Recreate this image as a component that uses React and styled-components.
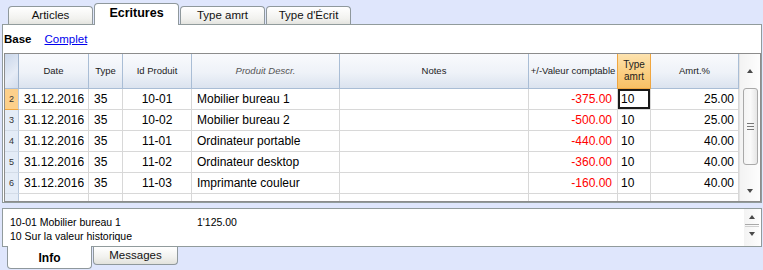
import React from "react";
import styled, { createGlobalStyle, css } from "styled-components";

const GlobalStyle = createGlobalStyle`
  body {
    margin: 0;
    background: #dfe6fc;
    font-family: "Liberation Sans", Arial, sans-serif;
  }
`;

const rows = [
  { n: 2, date: "31.12.2016", type: "35", id: "10-01", descr: "Mobilier bureau 1", val: "-375.00", ta: "10", pct: "25.00" },
  { n: 3, date: "31.12.2016", type: "35", id: "10-02", descr: "Mobilier bureau 2", val: "-500.00", ta: "10", pct: "25.00" },
  { n: 4, date: "31.12.2016", type: "35", id: "11-01", descr: "Ordinateur portable", val: "-440.00", ta: "10", pct: "40.00" },
  { n: 5, date: "31.12.2016", type: "35", id: "11-02", descr: "Ordinateur desktop", val: "-360.00", ta: "10", pct: "40.00" },
  { n: 6, date: "31.12.2016", type: "35", id: "11-03", descr: "Imprimante couleur", val: "-160.00", ta: "10", pct: "40.00" },
  { n: "", date: "", type: "", id: "", descr: "", val: "", ta: "", pct: "" },
];

const App = () => {
  return (
    <Page>
      <GlobalStyle />
      <TabBar>
        <Tab>Articles</Tab>
        <Tab $active>Ecritures</Tab>
        <Tab>Type amrt</Tab>
        <Tab>Type d'Écrit</Tab>
      </TabBar>
      <Panel>
        <Toolbar>
          <ViewName>Base</ViewName>
          <ViewLink href="#">Complet</ViewLink>
        </Toolbar>
        <GridBox>
          <Table>
            <HeadCell $corner />
            <HeadCell>Date</HeadCell>
            <HeadCell>Type</HeadCell>
            <HeadCell>Id Produit</HeadCell>
            <HeadCell $italic>Produit Descr.</HeadCell>
            <HeadCell>Notes</HeadCell>
            <HeadCell>+/-Valeur comptable</HeadCell>
            <HeadCell $current>
              Type
              <br />
              amrt
            </HeadCell>
            <HeadCell>Amrt.%</HeadCell>
            {rows.map((r, i) => (
              <React.Fragment key={i}>
                <RowNum $active={i === 0}>{r.n}</RowNum>
                <Cell>{r.date}</Cell>
                <Cell>{r.type}</Cell>
                <Cell $align="center">{r.id}</Cell>
                <Cell>{r.descr}</Cell>
                <Cell />
                <Cell $align="right" $red>
                  {r.val}
                </Cell>
                <Cell $selected={i === 0} $pad={3}>
                  {r.ta}
                </Cell>
                <Cell $align="right" $pad={4}>
                  {r.pct}
                </Cell>
              </React.Fragment>
            ))}
          </Table>
          <ScrollBar>
            <ArrowBtn $h={34}>
              <Arrow $up />
            </ArrowBtn>
            <Thumb $h={77}>
              <Grip />
            </Thumb>
            <Spacer />
            <ArrowBtn $h={20}>
              <Arrow />
            </ArrowBtn>
          </ScrollBar>
        </GridBox>
      </Panel>
      <InfoPanel>
        <InfoText>
          <InfoLine>
            <InfoLabel>10-01 Mobilier bureau 1</InfoLabel>
            <span>1'125.00</span>
          </InfoLine>
          <InfoLine>
            <InfoLabel>10 Sur la valeur historique</InfoLabel>
          </InfoLine>
        </InfoText>
        <SmallScroll>
          <ArrowBtn $h={14}>
            <Arrow $up />
          </ArrowBtn>
          <SmallThumb />
          <ArrowBtn $h={14}>
            <Arrow />
          </ArrowBtn>
        </SmallScroll>
      </InfoPanel>
      <BottomTabs>
        <BottomTab $active>Info</BottomTab>
        <BottomTab>Messages</BottomTab>
      </BottomTabs>
    </Page>
  );
};

export default App;

const Page = styled.div`
  width: 763px;
  height: 270px;
  overflow: hidden;
  display: flex;
  flex-direction: column;
`;

const TabBar = styled.div`
  height: 24px;
  display: flex;
  align-items: flex-end;
  padding-left: 8px;
  gap: 1px;
  position: relative;
  z-index: 2;
`;

const Tab = styled.div`
  box-sizing: border-box;
  width: 85px;
  height: 18px;
  border: 1px solid #8f989c;
  border-bottom: none;
  border-radius: 4px 4px 0 0;
  background: linear-gradient(#ffffff, #f1f1ee 70%, #e4e4df);
  font-size: 11.5px;
  color: #111;
  text-align: center;
  line-height: 17px;

  ${(p) =>
    p.$active &&
    css`
      height: 22px;
      margin-bottom: -1px;
      background: #fff;
      font-weight: bold;
      font-size: 12.5px;
      line-height: 19px;
      color: #000;
    `}
`;

const Panel = styled.div`
  box-sizing: border-box;
  height: 179px;
  margin: 0 1px 0 2px;
  border: 1px solid #919b9c;
  background: #fff;
  display: flex;
  flex-direction: column;
`;

const Toolbar = styled.div`
  height: 28px;
  display: flex;
  align-items: center;
  padding-left: 1px;
  gap: 13px;
  font-size: 11.5px;
`;

const ViewName = styled.span`
  font-weight: bold;
  color: #000;
`;

const ViewLink = styled.a`
  color: #0000ee;
  text-decoration: underline;
`;

const GridBox = styled.div`
  box-sizing: border-box;
  height: 149px;
  margin-left: 1px;
  border: 1px solid #8c8c8c;
  display: flex;
  overflow: hidden;
`;

const Table = styled.div`
  display: grid;
  grid-template-columns: 14px 70px 34px 69px 148px 189px 89px 33px 88px;
  grid-auto-rows: 21px;
  grid-template-rows: 35px;
  align-content: start;
`;

const HeadCell = styled.div`
  box-sizing: border-box;
  border-right: 1px solid #a9bdd5;
  border-bottom: 1px solid #a9bdd5;
  background: linear-gradient(#f9fafd, #eef2f8 55%, #dbe3ef);
  display: flex;
  align-items: center;
  justify-content: center;
  text-align: center;
  font-size: 9.5px;
  line-height: 12px;
  color: #1b1b1b;

  ${(p) =>
    p.$italic &&
    css`
      font-style: italic;
      color: #555;
    `}

  ${(p) =>
    p.$corner &&
    css`
      background: linear-gradient(135deg, #c9d6ea, #e6ecf6 60%, #d2dcec);
      border-right-color: #9fb3cc;
    `}

  ${(p) =>
    p.$current &&
    css`
      background: linear-gradient(#fde3b0, #fbd085 50%, #f8c066);
      border-left: 1px solid #f0a640;
      border-right-color: #f0a640;
      border-bottom-color: #f0a640;
      margin-left: -1px;
      font-size: 10px;
    `}
`;

const RowNum = styled.div`
  box-sizing: border-box;
  background: #e4ecf7;
  border-right: 1px solid #b8c9de;
  border-bottom: 1px solid #d3dce8;
  font-size: 9px;
  color: #333;
  text-align: center;
  line-height: 20px;

  ${(p) =>
    p.$active &&
    css`
      background: #fdd08b;
      border-bottom-color: #f0a640;
    `}
`;

const Cell = styled.div`
  box-sizing: border-box;
  border-right: 1px solid #d8d8d8;
  border-bottom: 1px solid #d8d8d8;
  padding: 0 ${(p) => p.$pad ?? 5}px;
  font-size: 12px;
  line-height: 20px;
  white-space: nowrap;
  overflow: hidden;
  text-align: ${(p) => p.$align || "left"};
  color: ${(p) => (p.$red ? "#ff0000" : "#000")};

  ${(p) =>
    p.$selected &&
    css`
      box-shadow: inset 0 0 0 2px #1a1a1a;
    `}
`;

const ScrollBar = styled.div`
  flex: 1;
  display: flex;
  flex-direction: column;
  background: linear-gradient(to right, #f3f3f3, #fdfdfd);
  border-left: 1px solid #e3e3e3;
`;

const ArrowBtn = styled.div`
  height: ${(p) => p.$h}px;
  display: flex;
  align-items: center;
  justify-content: center;
`;

const Arrow = styled.div`
  width: 0;
  height: 0;
  border-left: 3.5px solid transparent;
  border-right: 3.5px solid transparent;
  ${(p) =>
    p.$up
      ? css`
          border-bottom: 4px solid #4a4a4a;
        `
      : css`
          border-top: 4px solid #4a4a4a;
        `}
`;

const Thumb = styled.div`
  box-sizing: border-box;
  height: ${(p) => p.$h}px;
  margin: 0 2px 0 3px;
  border: 1px solid #a9a9a9;
  border-radius: 3px;
  background: linear-gradient(to right, #f4f4f4, #fafafa 50%, #e6e6e6);
  display: flex;
  align-items: center;
  justify-content: center;
`;

const Grip = styled.div`
  width: 7px;
  height: 5px;
  border-top: 1px solid #777;
  border-bottom: 1px solid #777;
  position: relative;

  &::after {
    content: "";
    position: absolute;
    left: 0;
    right: 0;
    top: 2px;
    border-top: 1px solid #777;
  }
`;

const Spacer = styled.div`
  flex: 1;
`;

const InfoPanel = styled.div`
  box-sizing: border-box;
  height: 39px;
  margin: 5px 1px 0 2px;
  border: 1px solid #919b9c;
  background: #fff;
  display: flex;
`;

const InfoText = styled.div`
  flex: 1;
  padding: 6px 0 0 7px;
  font-size: 10.5px;
  line-height: 14px;
  color: #000;
`;

const InfoLine = styled.div`
  display: flex;
`;

const InfoLabel = styled.span`
  width: 187px;
`;

const SmallScroll = styled.div`
  width: 16px;
  margin-right: 1px;
  padding-top: 1px;
  display: flex;
  flex-direction: column;
  background: linear-gradient(to right, #f3f3f3, #fdfdfd);
`;

const SmallThumb = styled.div`
  height: 1px;
  margin: 0 1px;
  border-top: 1px solid #a9a9a9;
  border-bottom: 1px solid #cfcfcf;
`;

const BottomTabs = styled.div`
  display: flex;
  align-items: flex-start;
  padding-left: 7px;
  gap: 1px;
`;

const BottomTab = styled.div`
  box-sizing: border-box;
  width: 85px;
  height: 18px;
  border: 1px solid #8f989c;
  border-top: none;
  border-radius: 0 0 4px 4px;
  background: linear-gradient(#ffffff, #f1f1ee 60%, #e2e2dc);
  font-size: 11.5px;
  color: #111;
  text-align: center;
  line-height: 16px;

  ${(p) =>
    p.$active &&
    css`
      height: 23px;
      margin-top: -1px;
      background: #fff;
      font-weight: bold;
      font-size: 12px;
      line-height: 24px;
      color: #000;
    `}
`;
